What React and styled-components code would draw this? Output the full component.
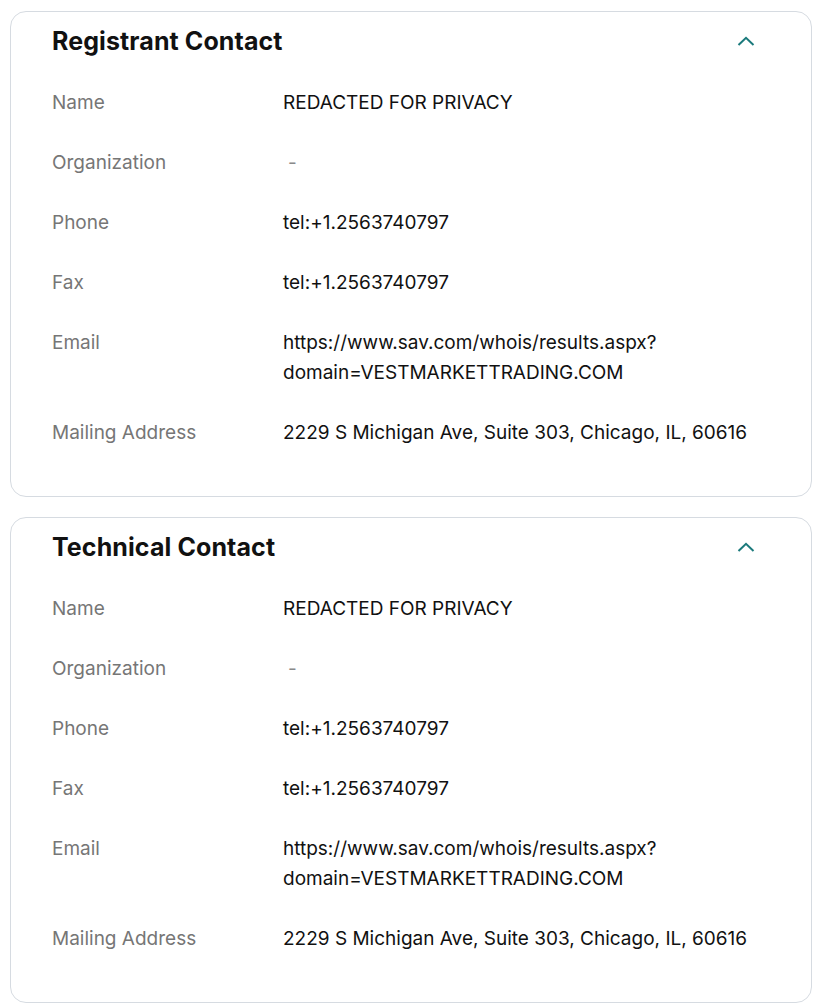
import React from 'react';
import styled, { createGlobalStyle } from 'styled-components';

const GlobalStyle = createGlobalStyle`
    body {
        margin: 0;
        background: #ffffff;
        font-family: Inter, "Noto Sans", sans-serif;
    }
`;

const Page = styled.div`
    padding: 11px 9px 0 10px;
    display: flex;
    flex-direction: column;
    gap: 20px;
`;

const Card = styled.section`
    border: 1px solid #d6dbe1;
    border-radius: 16px;
    padding: 13px 40px 48px 41px;
`;

const CardHeader = styled.div`
    display: flex;
    align-items: center;
    justify-content: space-between;
    height: 32px;
    margin-bottom: 31px;

    h2 {
        margin: 0;
        font-size: 25px;
        font-weight: 700;
        color: #111111;
        letter-spacing: 0.1px;
    }
`;

const Toggle = styled.button`
    border: none;
    background: none;
    padding: 0;
    margin-right: 15px;
    width: 20px;
    height: 20px;
    display: flex;
    align-items: center;
    justify-content: center;
    cursor: pointer;
`;

const Rows = styled.dl`
    margin: 0;
    display: flex;
    flex-direction: column;
    gap: 30px;
`;

const Row = styled.div`
    display: grid;
    grid-template-columns: 231px 1fr;
    font-size: 19px;
    line-height: 30px;

    dt {
        color: #767676;
    }

    dd {
        margin: 0;
        color: #111111;
    }
`;

const Empty = styled.span`
    color: #8a8a8a;
    margin-left: 5px;
`;

const Chevron = () => (
    <svg width="18" height="10" viewBox="0 0 18 10" fill="none">
        <path d="M1.5 9L9 1.8L16.5 9" stroke="#1b7a7c" strokeWidth="2" />
    </svg>
);

const contact = [
    ['Name', 'REDACTED FOR PRIVACY'],
    ['Organization', null],
    ['Phone', 'tel:+1.2563740797'],
    ['Fax', 'tel:+1.2563740797'],
    ['Email', <>https://www.sav.com/whois/results.aspx?<br />domain=VESTMARKETTRADING.COM</>],
    ['Mailing Address', '2229 S Michigan Ave, Suite 303, Chicago, IL, 60616'],
];

function ContactCard({ title }) {
    return (
        <Card>
            <CardHeader>
                <h2>{title}</h2>
                <Toggle aria-label="collapse"><Chevron /></Toggle>
            </CardHeader>
            <Rows>
                {contact.map(([label, value]) => (
                    <Row key={label}>
                        <dt>{label}</dt>
                        <dd>{value === null ? <Empty>-</Empty> : value}</dd>
                    </Row>
                ))}
            </Rows>
        </Card>
    );
}

export default function App() {
    return (
        <>
            <GlobalStyle />
            <Page>
                <ContactCard title="Registrant Contact" />
                <ContactCard title="Technical Contact" />
            </Page>
        </>
    );
}
